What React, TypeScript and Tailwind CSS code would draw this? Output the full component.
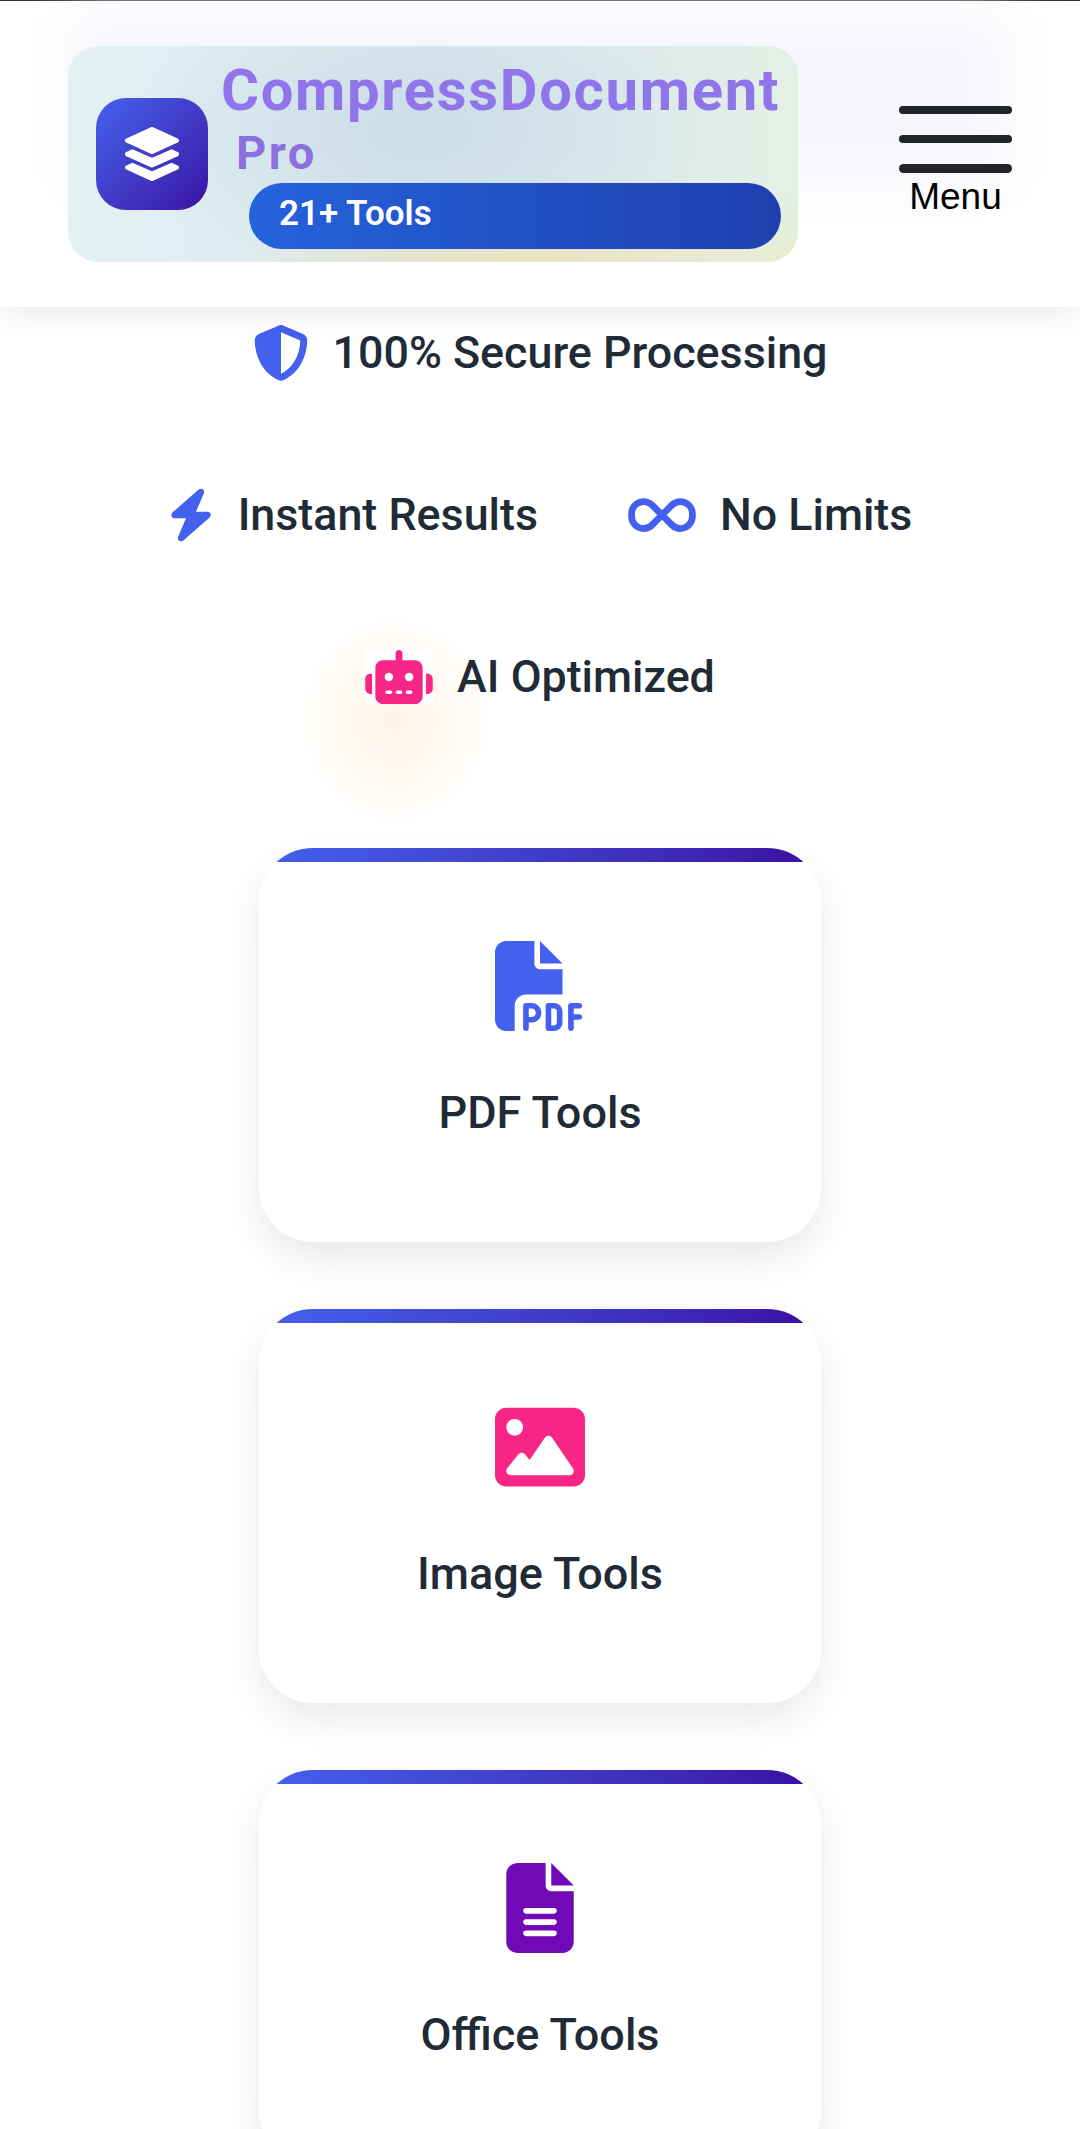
import type { IconType } from "react-icons"
import { FaLayerGroup } from "react-icons/fa"
import {
  FaBolt,
  FaFileLines,
  FaFilePdf,
  FaImage,
  FaInfinity,
  FaRobot,
  FaShieldHalved,
} from "react-icons/fa6"

const FEATURES: { label: string; Icon: IconType; iconClass: string; glow?: boolean }[] = [
  { label: "100% Secure Processing", Icon: FaShieldHalved, iconClass: "text-[#4361ee] w-[56px] h-[56px]" },
  { label: "Instant Results", Icon: FaBolt, iconClass: "text-[#4361ee] w-[46px] h-[54px]" },
  { label: "No Limits", Icon: FaInfinity, iconClass: "text-[#4361ee] w-[68px] h-[54px]" },
  { label: "AI Optimized", Icon: FaRobot, iconClass: "text-[#f72585] w-[68px] h-[54px] bg-white", glow: true },
]

const TOOLS: { label: string; Icon: IconType; iconClass: string }[] = [
  { label: "PDF Tools", Icon: FaFilePdf, iconClass: "text-[#4361ee]" },
  { label: "Image Tools", Icon: FaImage, iconClass: "text-[#f72585]" },
  { label: "Office Tools", Icon: FaFileLines, iconClass: "text-[#7209b7]" },
]

function Header() {
  return (
    <header className="relative z-10 h-[307px] bg-white border-t border-[#2f2f38] shadow-[0_8px_30px_rgba(0,0,0,0.08)]">
      {/* faint lavender wash behind the logo */}
      <div className="absolute left-[70px] right-[70px] top-[10px] h-[175px] bg-[#f6f5fb] blur-[28px]" />

      <div className="relative flex items-start justify-between pl-[68px] pr-[68px] pt-[45px]">
        {/* Logo */}
        <div className="flex w-[730px] h-[216px] items-center gap-[13px] rounded-[30px] pl-[28px] bg-[radial-gradient(ellipse_300px_80px_at_62%_106%,#efe3bb_0%,rgba(239,227,187,0)_100%),radial-gradient(ellipse_160px_70px_at_100%_100%,#e9eed2_0%,rgba(233,238,210,0)_100%),radial-gradient(ellipse_300px_150px_at_48%_40%,#cbdde9_0%,rgba(203,221,233,0)_100%),linear-gradient(90deg,#e3f1f3_0%,#d9e8ee_50%,#e3efe6_100%)]">
          <div className="flex h-[112px] w-[112px] shrink-0 items-center justify-center rounded-[30px] bg-gradient-to-br from-[#4361ee] to-[#3a0ca3]">
            <FaLayerGroup className="h-[54px] w-[54px] text-white" />
          </div>
          <div className="flex flex-col">
            <div className="text-[58px] leading-[60px] font-bold tracking-[1.7px] text-[#8f75e9]">CompressDocument</div>
            <div className="ml-[15px] mt-[10px] text-[47px] leading-[46px] font-bold tracking-[2.5px] text-[#8b70e0]">Pro</div>
            <div className="ml-[28px] mt-[7px] flex h-[66px] w-[532px] items-center rounded-[33px] bg-gradient-to-r from-[#2563dc] to-[#1e40af] pb-[3px] pl-[30px] text-[35px] font-semibold text-white">
              21+ Tools
            </div>
          </div>
        </div>

        {/* Menu */}
        <button className="mt-[60px] flex w-[113px] flex-col items-center font-['Liberation_Sans',sans-serif]">
          <span className="h-[8px] w-full rounded-full bg-[#212529]" />
          <span className="mt-[21px] h-[8px] w-full rounded-full bg-[#212529]" />
          <span className="mt-[21px] h-[9px] w-full rounded-full bg-[#212529]" />
          <span className="mt-[3px] text-[37px] leading-[42px] text-black">Menu</span>
        </button>
      </div>
    </header>
  )
}

function FeatureList() {
  return (
    <div className="mx-auto flex w-[800px] flex-wrap justify-center gap-x-[90px] gap-y-[108px] pt-[19px]">
      {FEATURES.map(({ label, Icon, iconClass, glow }) => (
        <div key={label} className="relative flex h-[54px] items-center gap-[24px]">
          {glow && (
            <div className="absolute left-[-70px] top-[-40px] h-[220px] w-[200px] bg-[radial-gradient(closest-side,rgba(255,190,110,0.18),rgba(255,190,110,0))]" />
          )}
          <Icon className={`relative shrink-0 ${iconClass}`} />
          <span className="relative text-[44.8px] font-medium text-[#212b36]">{label}</span>
        </div>
      ))}
    </div>
  )
}

function ToolCard({ label, Icon, iconClass }: { label: string; Icon: IconType; iconClass: string }) {
  return (
    <div className="relative w-[562px] shrink-0 overflow-hidden rounded-[54px] bg-white pt-[93px] pb-[103px] text-center shadow-[0_16px_40px_rgba(0,0,0,0.09)]">
      <div className="absolute inset-x-0 top-0 h-[14px] bg-gradient-to-r from-[#4361ee] to-[#3a0ca3]" />
      <Icon className={`mx-auto h-[90px] w-[90px] ${iconClass}`} />
      <div className="mt-[56px] text-[45px] leading-[52px] font-medium text-[#212b36]">{label}</div>
    </div>
  )
}

export default function App() {
  return (
    <div className="h-[2129px] overflow-hidden bg-white font-['Roboto',sans-serif]">
      <Header />
      <FeatureList />
      <main className="mt-[144px] flex flex-col items-center gap-[67px]">
        {TOOLS.map(tool => (
          <ToolCard key={tool.label} {...tool} />
        ))}
      </main>
    </div>
  )
}
